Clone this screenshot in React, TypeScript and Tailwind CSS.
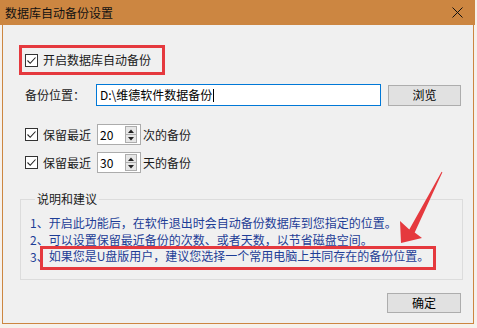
import React from 'react';

const font = { fontFamily: '"Noto Sans CJK SC", "Microsoft YaHei", sans-serif' };

function CheckBox() {
  return (
    <span className="w-[13px] h-[13px] border border-[#333333] bg-white flex items-center justify-center shrink-0">
      <svg width="11" height="11" viewBox="0 0 11 11">
        <path d="M1.5 5.5 L4.2 8.3 L9.5 2.5" fill="none" stroke="#222222" strokeWidth="1.1" />
      </svg>
    </span>
  );
}

function SpinBox({ value }: { value: string }) {
  return (
    <div className="w-[44px] h-[21px] border border-[#acacac] bg-white flex items-center pl-[2px] pr-[3px]">
      <span className="flex-1 text-[12px] leading-[19px] text-black">{value}</span>
      <div className="w-[12px] h-[17px] flex flex-col">
        <div className="h-[9px] border border-[#adadad] bg-[#e6e6e6] flex items-center justify-center">
          <svg width="6" height="4" viewBox="0 0 6 4"><path d="M0 4 L3 0.5 L6 4 Z" fill="#222" /></svg>
        </div>
        <div className="h-[8px] border border-t-0 border-[#adadad] bg-[#e6e6e6] flex items-center justify-center">
          <svg width="6" height="4" viewBox="0 0 6 4"><path d="M0 0 L3 3.5 L6 0 Z" fill="#222" /></svg>
        </div>
      </div>
    </div>
  );
}

function App() {
  return (
    <div className="w-[477px] h-[328px] bg-[#f6f1ec] overflow-hidden text-[12px] text-[#1a1a1a]" style={font}>
      <div className="w-[475px] h-[25px] bg-[#cc8641] flex items-center pl-[5px] pr-[12px]">
        <span className="flex-1 text-[12px] leading-[16px] text-[#111]">数据库自动备份设置</span>
        <svg width="11" height="11" viewBox="0 0 11 11">
          <path d="M0.5 0.5 L10.5 10.5 M10.5 0.5 L0.5 10.5" stroke="#111" strokeWidth="1" />
        </svg>
      </div>

      <div className="ml-[2px] w-[472px] h-[299px] border-x border-b border-[#cc8641] bg-[#f0f0f0] relative flex flex-col">
        <div className="mt-[20px] ml-[16px] w-[146px] h-[30px] border-[3px] border-[#e5393e] flex items-center pl-[3px] gap-[5px]">
          <CheckBox />
          <span className="leading-[16px]">开启数据库自动备份</span>
        </div>

        <div className="mt-[9px] ml-[22px] flex items-center h-[22px]">
          <span className="w-[71px]">备份位置：</span>
          <div className="w-[285px] h-[22px] border border-[#0078d7] bg-white flex items-center pl-[3px]">
            <span className="text-black leading-[16px]">D:\维德软件数据备份</span>
            <span className="w-[1px] h-[13px] bg-black ml-[1px]" />
          </div>
          <button className="ml-[7px] w-[73px] h-[21px] border border-[#adadad] bg-[#e1e1e1] text-[12px] leading-[16px] text-black">浏览</button>
        </div>

        <div className="mt-[18px] ml-[22px] flex items-center h-[21px]">
          <CheckBox />
          <span className="ml-[5px] w-[54px]">保留最近</span>
          <SpinBox value="20" />
          <span className="ml-[2px]">次的备份</span>
        </div>

        <div className="mt-[7px] ml-[22px] flex items-center h-[21px]">
          <CheckBox />
          <span className="ml-[5px] w-[54px]">保留最近</span>
          <SpinBox value="30" />
          <span className="ml-[2px]">天的备份</span>
        </div>

        <fieldset className="mt-[18px] ml-[17px] w-[443px] h-[89px] border border-[#dcdcdc] pl-[9px] pr-0 m-0">
          <legend className="ml-[5px] px-[2px] leading-[16px] text-[#1a1a1a]">说明和建议</legend>
          <div className="mt-[7px] text-[#1d3d96] leading-[17px]">
            <div>1、开启此功能后，在软件退出时会自动备份数据库到您指定的位置。</div>
            <div>2、可以设置保留最近备份的次数、或者天数，以节省磁盘空间。</div>
            <div className="flex items-start h-[17px]">
              <span>3、</span>
              <span className="-ml-[9px] -mt-[2px] h-[24px] border-[3px] border-[#e5393e] pl-[6px] pr-[4px] leading-[14px] pb-[4px] whitespace-nowrap">
                如果您是U盘版用户，建议您选择一个常用电脑上共同存在的备份位置。
              </span>
            </div>
          </div>
        </fieldset>

        <div className="mt-[13px] flex justify-end pr-[12px]">
          <button className="w-[74px] h-[20px] border border-[#adadad] bg-[#e1e1e1] text-[12px] leading-[16px] text-black">确定</button>
        </div>

        <svg className="absolute left-0 top-0 pointer-events-none" width="472" height="299" viewBox="0 0 472 299">
          <polygon
            points="398,218 397,196 406.3,204.6 438.6,146.8 439.4,147.2 411.7,207.4 419,213"
            fill="#e5393e"
          />
        </svg>
      </div>
    </div>
  );
}

export default App;
